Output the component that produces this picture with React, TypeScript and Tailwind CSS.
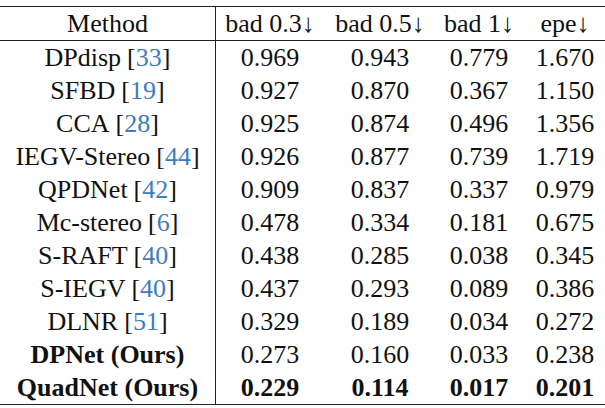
import React from 'react'

interface Row {
  name: string
  cite?: string
  values: string[]
  bold?: boolean
}

const rows: Row[] = [
  { name: 'DPdisp', cite: '33', values: ['0.969', '0.943', '0.779', '1.670'] },
  { name: 'SFBD', cite: '19', values: ['0.927', '0.870', '0.367', '1.150'] },
  { name: 'CCA', cite: '28', values: ['0.925', '0.874', '0.496', '1.356'] },
  { name: 'IEGV-Stereo', cite: '44', values: ['0.926', '0.877', '0.739', '1.719'] },
  { name: 'QPDNet', cite: '42', values: ['0.909', '0.837', '0.337', '0.979'] },
  { name: 'Mc-stereo', cite: '6', values: ['0.478', '0.334', '0.181', '0.675'] },
  { name: 'S-RAFT', cite: '40', values: ['0.438', '0.285', '0.038', '0.345'] },
  { name: 'S-IEGV', cite: '40', values: ['0.437', '0.293', '0.089', '0.386'] },
  { name: 'DLNR', cite: '51', values: ['0.329', '0.189', '0.034', '0.272'] },
  { name: 'DPNet (Ours)', values: ['0.273', '0.160', '0.033', '0.238'] },
  { name: 'QuadNet (Ours)', values: ['0.229', '0.114', '0.017', '0.201'], bold: true },
]

const headers = ['bad 0.3↓', 'bad 0.5↓', 'bad 1↓', 'epe↓']

const cols = 'grid grid-cols-[216px_108px_112px_86px_86px]'

export default function App() {
  return (
    <div className="w-[605px] h-[408px] overflow-hidden bg-white text-[#111] font-serif text-[26px]">
      <div className="font-['Times_New_Roman',Times,serif] mt-[6px] w-[608px] border-t border-b border-[#222]">
        <div className={`${cols} h-[34px] leading-[33px] border-b border-[#222]`}>
          <div className="flex justify-center whitespace-nowrap border-r border-[#222]">Method</div>
          {headers.map((h) => (
            <div key={h} className="flex justify-center whitespace-nowrap">
              {h}
            </div>
          ))}
        </div>
        {rows.map((r, i) => (
          <div key={i} className={`${cols} h-[33px] leading-[33px]`}>
            <div
              className={`flex justify-center whitespace-nowrap border-r border-[#222] ${
                i >= 9 ? 'font-bold' : ''
              }`}
            >
              {r.name}
              {r.cite && (
                <span className="ml-[6px]">
                  [<span className="text-[#3d7dbd]">{r.cite}</span>]
                </span>
              )}
            </div>
            {r.values.map((v, j) => (
              <div
                key={j}
                className={`flex justify-center whitespace-nowrap ${r.bold ? 'font-bold' : ''}`}
              >
                {v}
              </div>
            ))}
          </div>
        ))}
      </div>
    </div>
  )
}
